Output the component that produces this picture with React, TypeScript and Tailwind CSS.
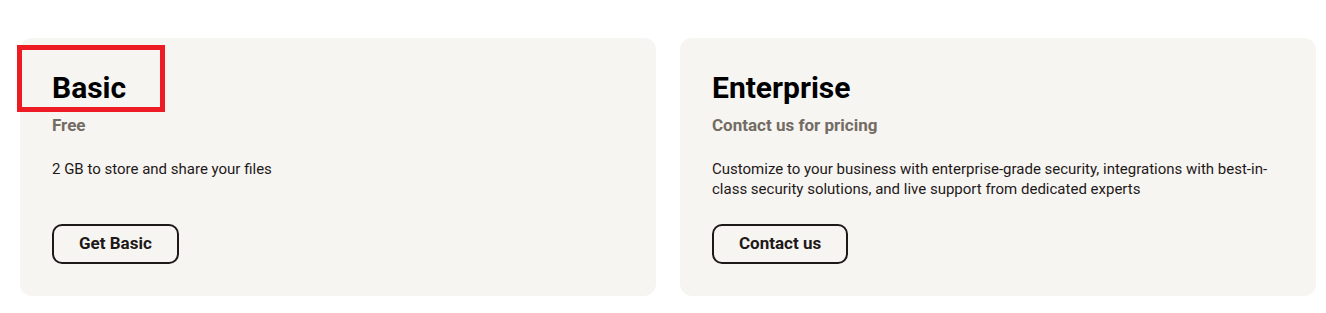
const plans = [
  {
    name: 'Basic',
    price: 'Free',
    description: '2 GB to store and share your files',
    cta: 'Get Basic',
  },
  {
    name: 'Enterprise',
    price: 'Contact us for pricing',
    description:
      'Customize to your business with enterprise-grade security, integrations with best-in-class security solutions, and live support from dedicated experts',
    cta: 'Contact us',
  },
]

function PlanCard({ plan }: { plan: (typeof plans)[number] }) {
  return (
    <div className="flex h-[258px] flex-col rounded-xl bg-[#f7f5f2] p-8">
      <h2 className="text-[30px] font-bold leading-[36px] text-[#000000]">
        {plan.name}
      </h2>
      <div className="mt-[7px] text-[17px] font-bold leading-6 text-[#736c64]">
        {plan.price}
      </div>
      <p className="mt-[22px] text-[15px] leading-5 text-[#1e1919]">
        {plan.description}
      </p>
      <div className="mt-auto">
        <button className="h-10 rounded-[10px] border-2 border-[#1e1919] px-[25px] text-[17px] font-bold text-[#1e1919]">
          {plan.cta}
        </button>
      </div>
    </div>
  )
}

export default function App() {
  return (
    <div
      className="relative min-h-[313px] bg-white pl-5 pr-[10px] pt-[38px]"
      style={{ fontFamily: 'Roboto, "Liberation Sans", sans-serif' }}
    >
      <div className="grid grid-cols-2 gap-6">
        {plans.map((plan) => (
          <PlanCard key={plan.name} plan={plan} />
        ))}
      </div>
      {/* annotation box over the first title */}
      <div className="pointer-events-none absolute left-[17px] top-[45px] h-[67px] w-[148px] border-[5px] border-[#ed1c24]" />
    </div>
  )
}
